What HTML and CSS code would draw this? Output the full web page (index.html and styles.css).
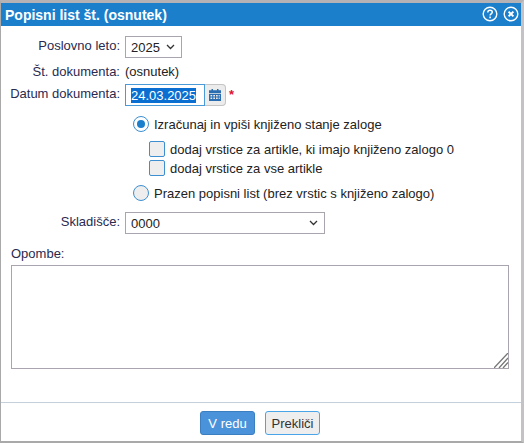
FILE: index.html
```html
<!DOCTYPE html>
<html lang="sl">
<head>
  <meta charset="UTF-8">
  <title>Popisni list</title>
  <link rel="stylesheet" href="styles.css">
</head>
<body>
  <div class="dialog">
    <div class="titlebar">
      <span class="title">Popisni list št. (osnutek)</span>
      <span class="title-icons">
        <svg width="16" height="16" viewBox="0 0 16 16" fill="none" stroke="#fff">
          <circle cx="8" cy="8" r="6.8" stroke-width="1.4"/>
          <path d="M5.8 6.400c0-1.400 1-2.200 2.300-2.200s2.200.8 2.200 1.900c0 1.700-2.200 1.700-2.200 3.400" stroke-width="1.500"/>
          <path d="M8.100 10.600v1.600" stroke-width="1.600"/>
        </svg>
        <svg width="16" height="16" viewBox="0 0 16 16" fill="none" stroke="#fff">
          <circle cx="8" cy="8" r="6.8" stroke-width="1.4"/>
          <path d="M5.600 5.600l4.800 4.800M10.400 5.600l-4.800 4.800" stroke-width="2"/>
        </svg>
      </span>
    </div>

    <div class="content">
      <div class="row row-year">
        <label class="lbl">Poslovno leto:</label>
        <select class="sel sel-year"><option>2025</option></select>
      </div>
      <div class="row row-doc">
        <label class="lbl">Št. dokumenta:</label>
        <span class="doc-no">(osnutek)</span>
      </div>
      <div class="row row-date">
        <label class="lbl">Datum dokumenta:</label>
        <div class="date-input"><span class="selected">24.03.2025</span></div>
        <div class="date-btn">
          <svg width="12" height="12" viewBox="0 0 12 12" fill="#2a6db0">
            <path fill-rule="evenodd" d="M2.500 0h1.500v1.200h4V0h1.500v1.200H12V4H0V1.200h2.500zM0 4.800h12V12H0zM1.500 6v1.400h1.700V6zM4.300 6v1.400H6V6zM7 6v1.400h1.700V6zM9.700 6v1.400h1V6zM1.500 8.600V10h1.700V8.600zM4.300 8.600V10H6V8.600zM7 8.600V10h1.700V8.600zM9.700 8.600V10h1V8.600z"/>
          </svg>
        </div>
        <span class="star">*</span>
      </div>

      <div class="options">
        <div class="opt opt-radio">
          <span class="radio checked"></span>
          <span>Izračunaj in vpiši knjiženo stanje zaloge</span>
        </div>
        <div class="opt opt-check first">
          <span class="check"></span>
          <span>dodaj vrstice za artikle, ki imajo knjiženo zalogo 0</span>
        </div>
        <div class="opt opt-check">
          <span class="check"></span>
          <span>dodaj vrstice za vse artikle</span>
        </div>
        <div class="opt opt-radio second">
          <span class="radio"></span>
          <span>Prazen popisni list (brez vrstic s knjiženo zalogo)</span>
        </div>
      </div>

      <div class="row row-store">
        <label class="lbl">Skladišče:</label>
        <select class="sel sel-store"><option>0000</option></select>
      </div>

      <label class="notes-lbl">Opombe:</label>
      <div class="notes-wrap">
        <textarea class="notes"></textarea>
        <svg class="grip" width="14" height="15" viewBox="0 0 14 15" stroke="#777" stroke-width="1.300">
          <path d="M0 15L14 0M5 15L14 5M9 15l5-5.500"/>
        </svg>
      </div>
    </div>

    <div class="footer">
      <button class="btn btn-ok">V redu</button>
      <button class="btn btn-cancel">Prekliči</button>
    </div>
  </div>
</body>
</html>
```

FILE: styles.css
```css
html, body {
  margin: 0;
  padding: 0;
}
body {
  background: #fff;
  font-family: 'Liberation Sans', Arial, sans-serif;
  font-size: 13px;
  color: #222;
  overflow: hidden;
}
.dialog {
  width: 524px;
  box-sizing: border-box;
  border-top: 3px solid #b5b2b5;
  border-left: 1px solid #a9a9a9;
  border-right: 3px solid #c4c2c4;
  border-bottom: 2px solid #a9a9a9;
  background: #fff;
}
.titlebar {
  height: 23px;
  background: #1b7fcc;
  color: #fff;
  display: flex;
  align-items: center;
  justify-content: space-between;
  padding: 0 2px 0 4px;
}
.title {
  font-weight: bold;
  font-size: 14px;
}
.title-icons {
  display: flex;
  gap: 5px;
  margin-top: -2px;
}
.content {
  height: 376px;
  padding-top: 10px;
  box-sizing: border-box;
}
.row {
  display: flex;
  align-items: flex-start;
}
.lbl {
  width: 119px;
  height: 15px;
  line-height: 15px;
  text-align: right;
  margin: 2px 5px 0 0;
  color: #2a2a50;
}
.sel {
  appearance: none;
  height: 22px;
  box-sizing: border-box;
  border: 1px solid #a9a4ad;
  background: #fff url("data:image/svg+xml,%3Csvg xmlns='http://www.w3.org/2000/svg' width='9' height='6'%3E%3Cpath d='M1 1l3.500 3.500L8 1' fill='none' stroke='%23333' stroke-width='1.300'/%3E%3C/svg%3E") no-repeat right 6px center;
  font: 13px 'Liberation Sans', Arial, sans-serif;
  color: #222;
  padding: 0 0 0 5px;
  border-radius: 0;
}
.sel-year {
  width: 57px;
}
.sel-store {
  width: 200px;
}
.row-doc {
  margin-top: 4px;
  height: 20px;
}
.doc-no {
  line-height: 15px;
  margin-top: 2px;
}
.row-date {
  height: 22px;
  margin-top: 2px;
}
.date-input {
  width: 80px;
  height: 22px;
  box-sizing: border-box;
  border: 1px solid #4a9ad8;
  padding: 3px 5px;
  line-height: 15px;
}
.selected {
  display: inline-block;
  height: 15px;
  background: #0a6fd0;
  color: #fff;
}
.date-btn {
  width: 21px;
  height: 22px;
  box-sizing: border-box;
  border: 1px solid #c4c4c4;
  border-left: none;
  border-radius: 0 4px 4px 0;
  background: #ececec;
  display: flex;
  align-items: center;
  justify-content: center;
}
.star {
  color: #e01030;
  font-weight: bold;
  margin: 3px 0 0 3px;
}
.options {
  margin: 10px 0 0 132px;
}
.opt {
  display: flex;
  align-items: center;
  height: 16px;
}
.opt-radio {
  gap: 5px;
}
.opt-check {
  margin: 3px 0 0 16px;
  gap: 5px;
}
.opt-check.first {
  margin-top: 9px;
}
.opt-radio.second {
  margin-top: 9px;
}
.radio {
  width: 16px;
  height: 16px;
  box-sizing: border-box;
  border: 1px solid #3d8fd0;
  border-radius: 50%;
  background: #eee;
  display: flex;
  align-items: center;
  justify-content: center;
}
.radio.checked {
  background: #fff;
}
.radio.checked::after {
  content: "";
  width: 8px;
  height: 8px;
  border-radius: 50%;
  background: #1b7fcc;
}
.check {
  width: 16px;
  height: 16px;
  box-sizing: border-box;
  border: 1px solid #3d8fd0;
  border-radius: 2px;
  background: #eee;
}
.row-store {
  margin-top: 11px;
}
.notes-lbl {
  display: block;
  height: 15px;
  line-height: 15px;
  margin: 12px 0 4px 10px;
  color: #2a2a50;
}
.notes-wrap {
  position: relative;
  width: 498px;
  height: 104px;
  margin-left: 10px;
}
.notes {
  display: block;
  width: 100%;
  height: 100%;
  box-sizing: border-box;
  border: 1px solid #a9a4ad;
  border-radius: 0;
  outline: none;
  resize: none;
}
.grip {
  position: absolute;
  right: 1px;
  bottom: 1px;
}
.footer {
  height: 39px;
  box-sizing: border-box;
  border-top: 1px solid #c4d0dc;
  display: flex;
  justify-content: center;
  align-items: flex-start;
  gap: 10px;
  padding: 8px 2px 0 0;
}
.btn {
  height: 24px;
  width: 55px;
  box-sizing: border-box;
  border-radius: 3px;
  font: 13px 'Liberation Sans', Arial, sans-serif;
  padding: 0;
}
.btn-ok {
  background: #4a93da;
  border: 1px solid #3b7fc0;
  color: #fff;
}
.btn-cancel {
  background: #eee;
  border: 1px solid #4aa5e8;
  color: #333;
}
```
